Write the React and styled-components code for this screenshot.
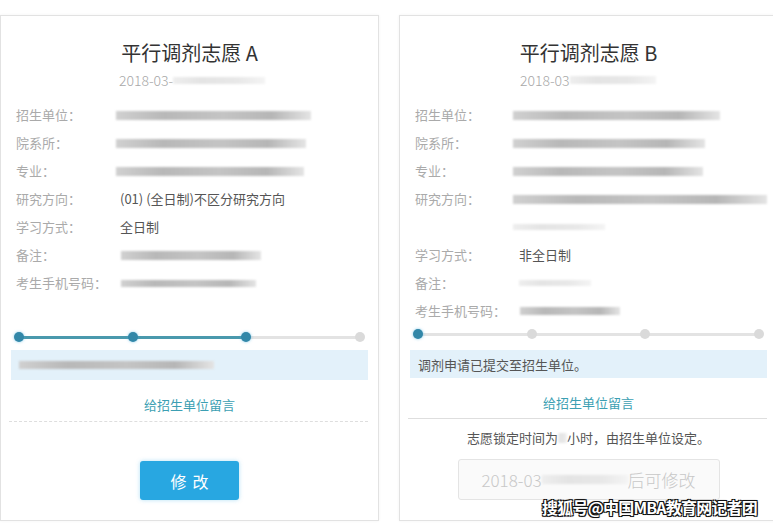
import React from "react";
import styled, { createGlobalStyle } from "styled-components";

const Global = createGlobalStyle`
  html, body { margin: 0; padding: 0; background: #fff; }
  body { width: 773px; height: 524px; overflow: hidden; font-family: "Noto Sans CJK SC", "Noto Sans", sans-serif; color: #555; }
`;

const Page = styled.div`
  display: flex;
  gap: 20px;
  padding-top: 15px;
  width: 773px;
  height: 524px;
  box-sizing: border-box;
  overflow: hidden;
`;

const Card = styled.div`
  position: relative;
  flex: 0 0 379px;
  height: 506px;
  box-sizing: border-box;
  border: 1px solid #e2e2e2;
  box-shadow: 0 0 3px rgba(0,0,0,0.05);
  display: flex;
  flex-direction: column;
  background: #fff;
`;

const Header = styled.div`
  display: flex;
  flex-direction: column;
  align-items: center;
  padding-top: 23px;
`;

const Title = styled.div`
  font-size: 20px;
  line-height: 28px;
  color: #333;
  font-weight: 400;
`;

const DateLine = styled.div`
  display: flex;
  align-items: center;
  align-self: flex-start;
  margin-left: ${p => p.$indent}px;
  margin-top: 2px;
  height: 22px;
  font-size: 14px;
  color: #a8a8a8;
  font-weight: 300;
`;

const Blur = styled.span`
  display: inline-block;
  width: ${p => p.$w}px;
  height: ${p => p.$h || 9}px;
  margin-left: ${p => p.$ml || 0}px;
  background: linear-gradient(to right, ${p => p.$faint ? "#eee, #e4e4e4 30%, #e8e8e8 70%, #f4f4f4" : "#d0d0d0, #b8b8b8 25%, #c4c4c4 55%, #b6b6b6 80%, #e4e4e4"});
  filter: blur(1.1px);
  vertical-align: middle;
`;

const Rows = styled.div`
  display: flex;
  flex-direction: column;
  margin-top: 10px;
  padding-left: 15px;
`;

const Row = styled.div`
  display: grid;
  grid-template-columns: 104px 1fr;
  align-items: start;
  font-size: 13px;
  line-height: 28px;
`;

const Label = styled.div`
  color: #aaa;
`;

const Value = styled.div`
  color: #555;
  display: flex;
  flex-direction: column;
`;

const ValueLine = styled.div`
  height: 28px;
  display: flex;
  align-items: center;
`;

const Progress = styled.div`
  position: relative;
  margin: ${p => p.$mt}px 13px 0 13px;
  height: 10px;
  display: flex;
  justify-content: space-between;
  align-items: center;
`;

const Track = styled.div`
  position: absolute;
  left: 5px;
  right: 5px;
  top: 4px;
  height: 3px;
  background: linear-gradient(to right, #4a99ad ${p => p.$pct}%, #e3e3e3 ${p => p.$pct}%);
`;

const Dot = styled.span`
  position: relative;
  width: 10px;
  height: 10px;
  border-radius: 50%;
  background: ${p => p.$on ? "#3287a8" : "#dadada"};
  box-shadow: ${p => p.$on ? "0 0 3px rgba(60,170,220,0.6)" : "none"};
`;

const InfoBox = styled.div`
  margin: ${p => p.$mt}px 10px 0 10px;
  height: ${p => p.$h}px;
  background: #e3f1fa;
  display: flex;
  align-items: center;
  padding-left: 8px;
  font-size: 13px;
  color: #555;
`;

const LinkText = styled.div`
  text-align: center;
  font-size: 13px;
  line-height: 20px;
  margin-top: ${p => p.$mt}px;
  color: #3c9fb3;
`;

const Divider = styled.div`
  margin: ${p => p.$mt}px 10px 0 8px;
  border-top: 1px ${p => p.$dotted ? "dashed" : "solid"} #dedede;
`;

const EditButton = styled.div`
  align-self: center;
  margin-top: 39px;
  width: 99px;
  height: 39px;
  border-radius: 3px;
  background: #28a7e1;
  box-shadow: 0 0 4px rgba(40,167,225,0.35);
  color: #fff;
  font-size: 16px;
  letter-spacing: 6px;
  text-indent: 6px;
  display: flex;
  align-items: center;
  justify-content: center;
`;

const Notice = styled.div`
  text-align: center;
  font-size: 13px;
  line-height: 20px;
  margin-top: 9px;
  color: #555;
  display: flex;
  justify-content: center;
  align-items: center;
`;

const DisabledButton = styled.div`
  align-self: center;
  margin-top: 11px;
  width: 262px;
  height: 41px;
  box-sizing: border-box;
  border: 1px solid #e4e4e4;
  border-radius: 3px;
  background: #fafafa;
  color: #c8c8c8;
  font-size: 17px;
  font-weight: 300;
  display: flex;
  align-items: center;
  justify-content: center;
`;

const Watermark = styled.div`
  position: absolute;
  right: 20px;
  bottom: 1px;
  font-size: 16px;
  font-weight: 700;
  letter-spacing: -0.8px;
  color: #fff;
  text-shadow: -1px -1px 0 #111, 1px -1px 0 #111, -1px 1px 0 #111, 1px 1px 0 #111, 0 0 2px #000;
  white-space: nowrap;
`;

function Field({ label, children }) {
  return (
    <Row>
      <Label>{label}</Label>
      <Value>{children}</Value>
    </Row>
  );
}

export default function App() {
  return (
    <>
      <Global />
      <Page>
        <Card>
          <Header>
            <Title>平行调剂志愿 A</Title>
            <DateLine $indent={118}>2018-03-<Blur $w={92} $h={7} $faint /></DateLine>
          </Header>
          <Rows>
            <Field label="招生单位："><ValueLine><Blur $w={195} $ml={-4} /></ValueLine></Field>
            <Field label="院系所："><ValueLine><Blur $w={190} $ml={-4} /></ValueLine></Field>
            <Field label="专业："><ValueLine><Blur $w={188} $ml={-4} /></ValueLine></Field>
            <Field label="研究方向："><ValueLine>(01) (全日制)不区分研究方向</ValueLine></Field>
            <Field label="学习方式："><ValueLine>全日制</ValueLine></Field>
            <Field label="备注："><ValueLine><Blur $w={140} $ml={1} /></ValueLine></Field>
            <Field label="考生手机号码："><ValueLine><Blur $w={135} $ml={1} $h={7} /></ValueLine></Field>
          </Rows>
          <Progress $mt={35}>
            <Track $pct={67} />
            <Dot $on /><Dot $on /><Dot $on /><Dot />
          </Progress>
          <InfoBox $mt={8} $h={30}><Blur $w={195} $h={8} /></InfoBox>
          <LinkText $mt={15}>给招生单位留言</LinkText>
          <Divider $mt={6} $dotted />
          <EditButton>修改</EditButton>
        </Card>
        <Card>
          <Header>
            <Title>平行调剂志愿 B</Title>
            <DateLine $indent={120}>2018-03<Blur $w={86} $h={8} $faint /></DateLine>
          </Header>
          <Rows>
            <Field label="招生单位："><ValueLine><Blur $w={207} $ml={-6} /></ValueLine></Field>
            <Field label="院系所："><ValueLine><Blur $w={192} $ml={-6} /></ValueLine></Field>
            <Field label="专业："><ValueLine><Blur $w={190} $ml={-6} /></ValueLine></Field>
            <Field label="研究方向：">
              <ValueLine><Blur $w={254} $ml={-6} /></ValueLine>
              <ValueLine><Blur $w={92} $ml={-6} $h={6} $faint /></ValueLine>
            </Field>
            <Field label="学习方式："><ValueLine>非全日制</ValueLine></Field>
            <Field label="备注："><ValueLine><Blur $w={72} $h={6} $faint /></ValueLine></Field>
            <Field label="考生手机号码："><ValueLine><Blur $w={100} $ml={1} $h={8} /></ValueLine></Field>
          </Rows>
          <Progress $mt={4}>
            <Track $pct={0} />
            <Dot $on /><Dot /><Dot /><Dot />
          </Progress>
          <InfoBox $mt={11} $h={28}>调剂申请已提交至招生单位。</InfoBox>
          <LinkText $mt={15}>给招生单位留言</LinkText>
          <Divider $mt={5} />
          <Notice>志愿锁定时间为<Blur $w={9} $h={10} $faint />小时，由招生单位设定。</Notice>
          <DisabledButton>2018-03<Blur $w={86} $h={9} $faint />后可修改</DisabledButton>
          <Watermark>搜狐号@中国MBA教育网记者团</Watermark>
        </Card>
      </Page>
    </>
  );
}
